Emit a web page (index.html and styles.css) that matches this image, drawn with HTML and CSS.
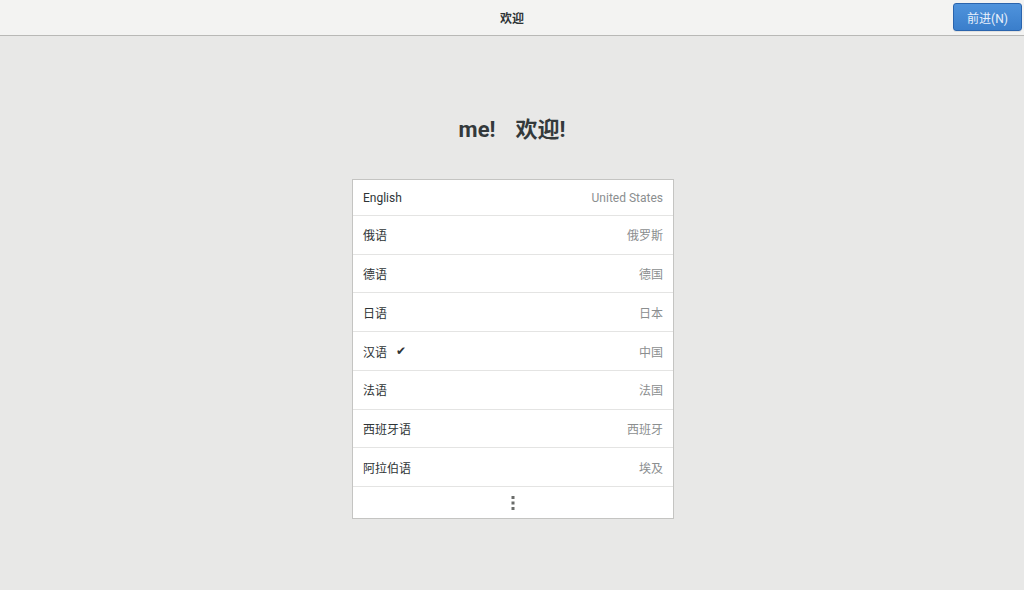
FILE: index.html
```html
<!DOCTYPE html>
<html lang="zh">
<head>
<meta charset="utf-8">
<link rel="stylesheet" href="styles.css">
</head>
<body>
<header class="header">
  <div class="header-title">欢迎</div>
  <button class="next-btn">前进(N)</button>
</header>
<main class="main">
  <h1 class="welcome"><span class="w1">me!</span><span class="w2">欢迎!</span></h1>
  <div class="list">
    <div class="row first"><span class="lang">English</span><span class="region">United States</span></div>
    <div class="row"><span class="lang">俄语</span><span class="region">俄罗斯</span></div>
    <div class="row"><span class="lang">德语</span><span class="region">德国</span></div>
    <div class="row"><span class="lang">日语</span><span class="region">日本</span></div>
    <div class="row"><span class="lang">汉语<span class="check">✔</span></span><span class="region">中国</span></div>
    <div class="row"><span class="lang">法语</span><span class="region">法国</span></div>
    <div class="row"><span class="lang">西班牙语</span><span class="region">西班牙</span></div>
    <div class="row"><span class="lang">阿拉伯语</span><span class="region">埃及</span></div>
    <div class="row more">
      <svg width="4" height="14" viewBox="0 0 4 14"><rect x="0.5" y="0" width="3" height="3" fill="#6a6c6a"/><rect x="0.5" y="5.5" width="3" height="3" fill="#6a6c6a"/><rect x="0.5" y="11" width="3" height="3" fill="#6a6c6a"/></svg>
    </div>
  </div>
</main>
</body>
</html>
```
FILE: styles.css
```css
* { box-sizing: border-box; }
html, body { margin: 0; padding: 0; }
body {
  width: 1024px;
  height: 590px;
  overflow: hidden;
  background: #e8e8e7;
  font-family: "Roboto", "Noto Sans CJK SC", sans-serif;
  color: #2e3436;
}
.header {
  height: 36px;
  background: #f3f3f2;
  border-bottom: 1px solid #b8b8b6;
  display: flex;
  align-items: center;
  justify-content: center;
  position: relative;
}
.header-title {
  font-size: 12px;
  font-weight: bold;
  color: #2e3436;
}
.next-btn {
  position: absolute;
  right: 2px;
  top: 3px;
  width: 69px;
  height: 28px;
  border: 1px solid #2a64ad;
  border-radius: 3px;
  background: linear-gradient(#4f93dc, #3a7ecb);
  color: #e8f0fb;
  font-family: inherit;
  font-size: 12px;
  padding: 0;
  box-shadow: 0 1px 0 rgba(0,0,0,0.08);
}
.main {
  display: flex;
  flex-direction: column;
  align-items: center;
}
.welcome {
  margin: 79px 0 34px 0;
  height: 30px;
  line-height: 30px;
  font-size: 22px;
  font-weight: bold;
  color: #33393b;
  display: flex;
  gap: 20px;
}
.list {
  width: 322px;
  margin-left: 2px;
  background: #ffffff;
  border: 1px solid #c4c4c2;
  display: flex;
  flex-direction: column;
}
.row {
  height: 38.72px;
  flex: none;
  border-bottom: 1px solid #e4e4e3;
  display: flex;
  align-items: center;
  justify-content: space-between;
  padding: 0 10px 0 10px;
  font-size: 12px;
}
.row.first { height: 36px; }
.lang { color: #2e3436; display: flex; align-items: center; }
.region { color: #8b8e8f; }
.check { font-size: 12px; margin-left: 9px; color: #2e3436; }
.row.more {
  height: 31px;
  border-bottom: none;
  justify-content: center;
}
```
